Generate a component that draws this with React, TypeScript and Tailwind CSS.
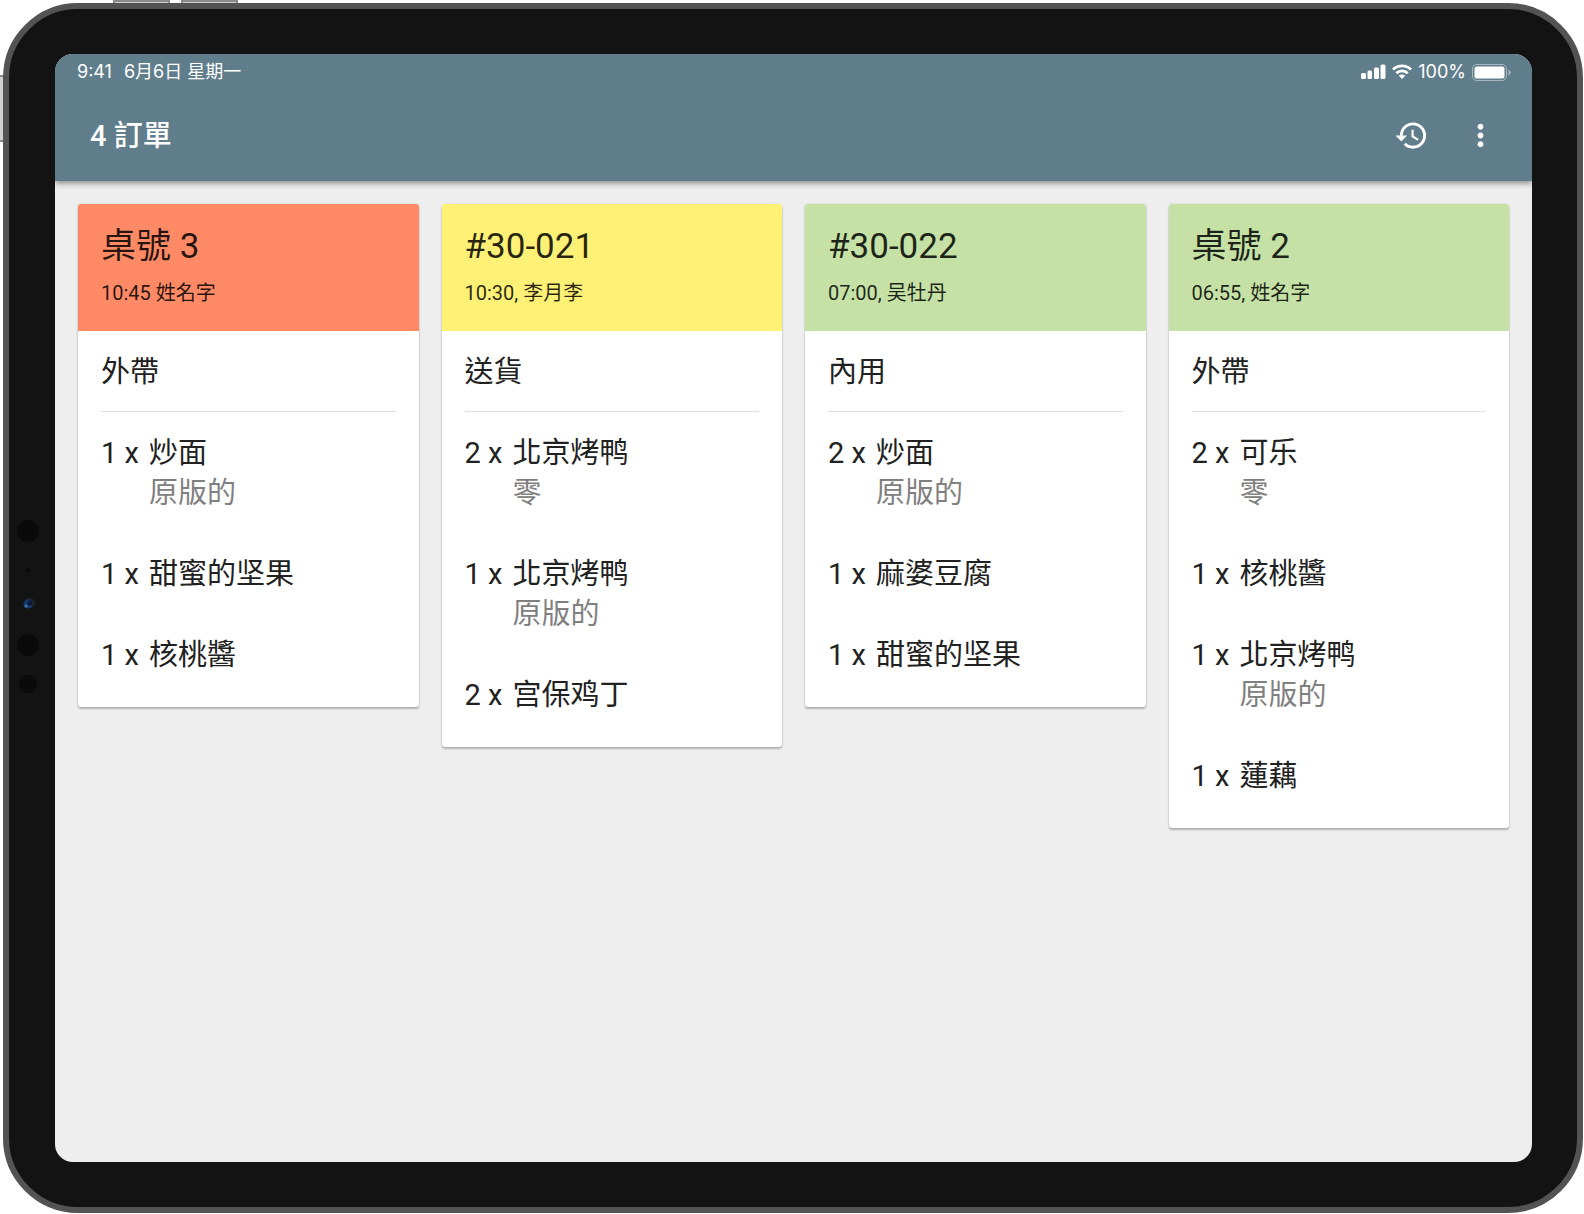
import clsx from 'clsx'
import { MdHistory, MdMoreVert } from 'react-icons/md'

interface OrderItem {
  qty: number
  name: string
  option?: string
}

interface Order {
  id: string
  title: string
  meta: string
  type: string
  status: 'late' | 'warning' | 'fresh'
  items: OrderItem[]
}

const orders: Order[] = [
  {
    id: 'a',
    title: '桌號 3',
    meta: '10:45 姓名字',
    type: '外帶',
    status: 'late',
    items: [
      { qty: 1, name: '炒面', option: '原版的' },
      { qty: 1, name: '甜蜜的坚果' },
      { qty: 1, name: '核桃醬' },
    ],
  },
  {
    id: 'b',
    title: '#30-021',
    meta: '10:30, 李月李',
    type: '送貨',
    status: 'warning',
    items: [
      { qty: 2, name: '北京烤鸭', option: '零' },
      { qty: 1, name: '北京烤鸭', option: '原版的' },
      { qty: 2, name: '宫保鸡丁' },
    ],
  },
  {
    id: 'c',
    title: '#30-022',
    meta: '07:00, 吴牡丹',
    type: '內用',
    status: 'fresh',
    items: [
      { qty: 2, name: '炒面', option: '原版的' },
      { qty: 1, name: '麻婆豆腐' },
      { qty: 1, name: '甜蜜的坚果' },
    ],
  },
  {
    id: 'd',
    title: '桌號 2',
    meta: '06:55, 姓名字',
    type: '外帶',
    status: 'fresh',
    items: [
      { qty: 2, name: '可乐', option: '零' },
      { qty: 1, name: '核桃醬' },
      { qty: 1, name: '北京烤鸭', option: '原版的' },
      { qty: 1, name: '蓮藕' },
    ],
  },
]

const statusColors = {
  late: 'bg-[#ff8a65]',
  warning: 'bg-[#fff176]',
  fresh: 'bg-[#c5e1a5]',
}

function StatusBar() {
  return (
    <div className="flex h-9 items-center justify-between pl-[22px] pr-[21px] font-['Inter','Noto_Sans_CJK_TC',sans-serif] text-[18px] leading-5">
      <div className="flex gap-3">
        <span>9:41</span>
        <span>6月6日 星期一</span>
      </div>
      <div className="flex items-center gap-[6px]">
        <svg width="25" height="16" viewBox="0 0 25 16" fill="currentColor" aria-hidden="true">
          <rect x="0" y="9" width="5" height="6" rx="1.5" />
          <rect x="6.500" y="6.500" width="4.500" height="8.500" rx="1.5" />
          <rect x="13" y="3.500" width="5" height="11.500" rx="1.5" />
          <rect x="19.500" y="0.500" width="5" height="14.500" rx="1.5" />
        </svg>
        <svg width="20" height="16" viewBox="0 0 20 16" fill="none" stroke="currentColor" strokeWidth="2.8" aria-hidden="true">
          <path d="M1 5.600A12.7 12.7 0 0 1 19 5.600" />
          <path d="M4.300 9.200A8 8 0 0 1 15.700 9.200" />
          <path d="M10 15L6.800 11.800A4.500 4.500 0 0 1 13.200 11.800Z" fill="currentColor" stroke="none" />
        </svg>
        <span>100%</span>
        <svg width="39" height="17" viewBox="0 0 39 17" aria-hidden="true">
          <rect x="0.5" y="0.5" width="34" height="16" rx="4.5" fill="none" stroke="#fff" strokeOpacity="0.45" />
          <rect x="2.5" y="2.5" width="30" height="12" rx="2.5" fill="#fff" />
          <path d="M36.5 5.5v6c1.2-.6 2-1.700 2-3s-.8-2.400-2-3z" fill="#fff" fillOpacity="0.45" />
        </svg>
      </div>
    </div>
  )
}

function OrderCard({ order }: { order: Order }) {
  return (
    <article className="overflow-hidden rounded-[3px] bg-white text-[#212121] shadow-[0_2px_2px_rgba(0,0,0,0.24),0_0_2px_rgba(0,0,0,0.16)]">
      <header className={clsx('px-[23px] pt-[23px] pb-6 text-black/85', statusColors[order.status])}>
        <h2 className="text-[35px] leading-10">{order.title}</h2>
        <p className="mt-3 text-[20px] leading-7">{order.meta}</p>
      </header>
      <div className="px-[23px] pb-8 text-[29px] leading-10">
        <h3 className="border-b border-[#e0e0e0] pt-[21px] pb-[19px]">{order.type}</h3>
        <ul className="flex flex-col gap-[41px] pt-[21px]">
          {order.items.map((item, index) => (
            <li key={index} className="flex">
              <span className="w-12 shrink-0">{item.qty} x</span>
              <div>
                <p>{item.name}</p>
                {item.option && <p className="text-[#808080]">{item.option}</p>}
              </div>
            </li>
          ))}
        </ul>
      </div>
    </article>
  )
}

// Sensor array in the left bezel
function Sensors() {
  return (
    <svg width="38" height="176" viewBox="0 0 38 176" aria-hidden="true">
      <circle cx="19" cy="11" r="11" fill="#0a0a0a" />
      <circle cx="19" cy="50" r="2" fill="#0a0a0a" />
      <circle cx="21" cy="83" r="5" fill="#22222a" />
      <circle cx="19" cy="84" r="4.500" fill="#183a6b" />
      <circle cx="21" cy="83" r="2.500" fill="#0b1a38" />
      <circle cx="17" cy="86" r="1.500" fill="#4076b5" />
      <circle cx="19" cy="125" r="11" fill="#0a0a0a" />
      <circle cx="19" cy="164" r="9" fill="#0a0a0a" />
    </svg>
  )
}

export default function App() {
  return (
    <div className="relative flex min-h-screen bg-white pt-[3px] pr-px pb-px pl-[3px] font-['Roboto','Noto_Sans_CJK_TC',sans-serif]">
      {/* hardware buttons */}
      <div className="absolute top-0 left-[113px] h-1 w-[57px] border-x-2 border-t-2 border-[#8a8a8a] bg-[#d0d0d0]" />
      <div className="absolute top-0 left-[181px] h-1 w-[57px] border-x-2 border-t-2 border-[#8a8a8a] bg-[#d0d0d0]" />
      <div className="absolute top-[75px] left-0 h-[67px] w-1 border-y-2 border-[#8a8a8a] bg-[#d0d0d0]" />

      <div className="relative flex flex-1 rounded-[75px] border-6 border-[#535353] bg-[#131313] py-[45px] pr-[45px]">
        <div className="flex w-[46px] shrink-0 items-center">
          <Sensors />
        </div>
        <div className="flex min-w-0 flex-1 flex-col overflow-hidden rounded-[18px] bg-[#eeeeee]">
          <header className="bg-[#607d8b] text-white shadow-[0_2px_6px_rgba(0,0,0,0.45)]">
            <StatusBar />
            <div className="flex h-[91px] items-center justify-between pr-[34px] pl-[35px]">
              <h1 className="text-[29px] leading-10 font-medium">4 訂單</h1>
              <div className="flex gap-[34px]">
                <button type="button" aria-label="歷史" className="cursor-pointer">
                  <MdHistory size={35} />
                </button>
                <button type="button" aria-label="更多" className="cursor-pointer">
                  <MdMoreVert size={35} />
                </button>
              </div>
            </div>
          </header>
          <main className="grid grid-cols-4 items-start gap-[23px] px-[23px] py-[23px]">
            {orders.map(order => (
              <OrderCard key={order.id} order={order} />
            ))}
          </main>
        </div>
      </div>
    </div>
  )
}
